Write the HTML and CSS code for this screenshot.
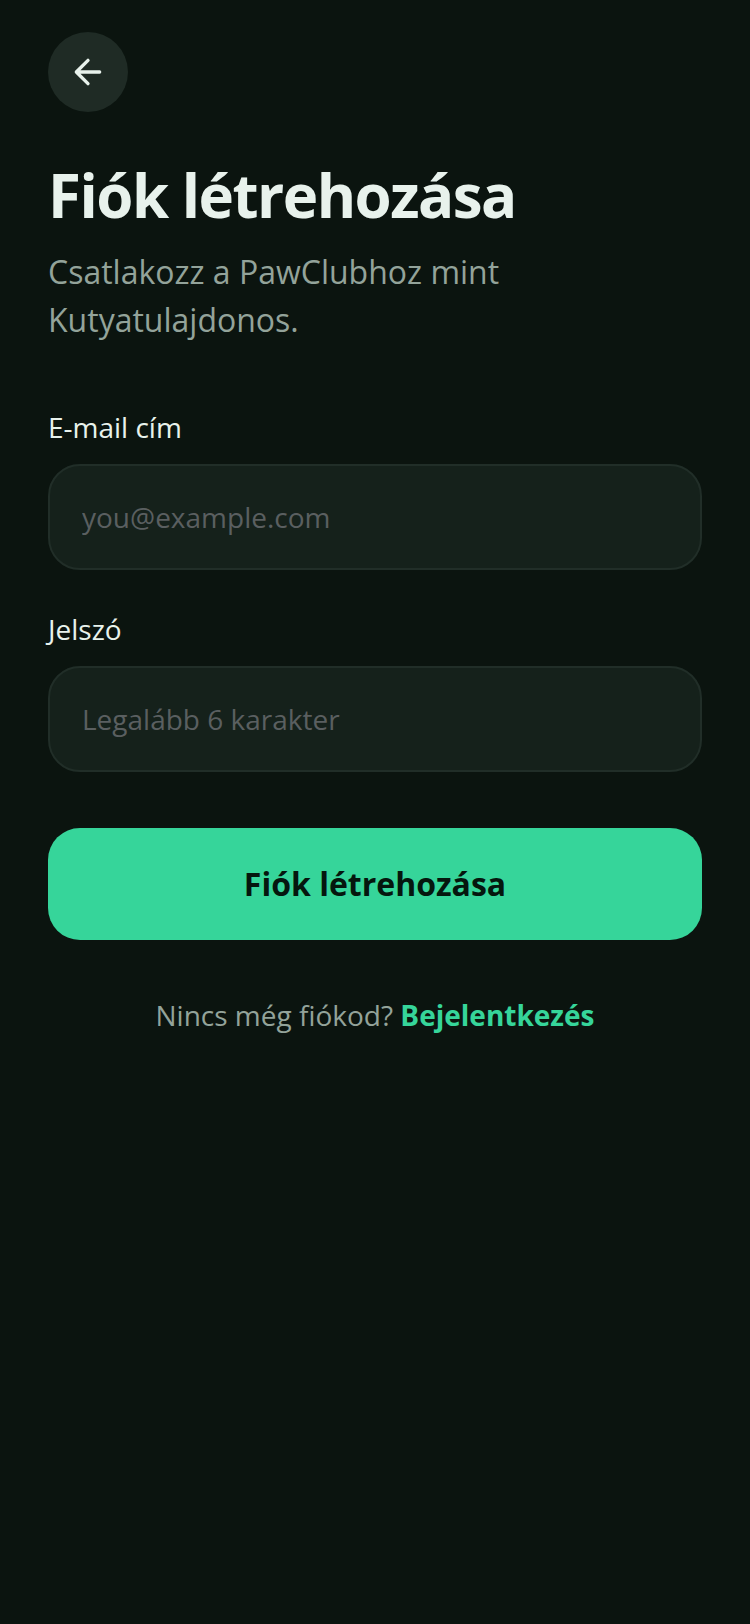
FILE: index.html
```
<!DOCTYPE html>
<html lang="hu">
<head>
  <meta charset="UTF-8" />
  <meta name="viewport" content="width=device-width, initial-scale=1.0"/>
  <title>PawClub - Fiók létrehozása</title>
  <link rel="stylesheet" href="styles.css">
</head>
<body>
  <main class="wrapper">
    <button type="button" class="back" aria-label="Vissza">
      <svg viewBox="0 0 24 24" aria-hidden="true">
        <path d="M19 12H5M12 19l-7-7 7-7" />
      </svg>
    </button>

    <header>
      <h1>Fiók létrehozása</h1>
      <p>Csatlakozz a PawClubhoz mint Kutyatulajdonos.</p>
    </header>

    <form id="signupForm">
      <div class="field">
        <label for="email">E-mail cím</label>
        <input type="email" id="email" placeholder="you@example.com" required />
      </div>
      <div class="field">
        <label for="password">Jelszó</label>
        <input type="password" id="password" placeholder="Legalább 6 karakter" minlength="6" required />
      </div>
      <button type="submit" class="submit">Fiók létrehozása</button>
    </form>

    <p class="login">Nincs még fiókod? <a href="#">Bejelentkezés</a></p>
  </main>
</body>
</html>
```
FILE: styles.css
```
* {
  box-sizing: border-box;
  margin: 0;
  padding: 0;
}

body {
  font-family: "Open Sans", "Noto Sans", sans-serif;
  background: #0b140f;
  min-height: 100vh;
  color: #e8f2ec;
}

.wrapper {
  padding: 32px 48px;
}

.back {
  display: flex;
  align-items: center;
  justify-content: center;
  width: 80px;
  height: 80px;
  border: none;
  border-radius: 50%;
  background: #1f2b25;
  color: #e8f2ec;
  cursor: pointer;
}

.back svg {
  width: 40px;
  height: 40px;
  fill: none;
  stroke: currentColor;
  stroke-width: 2;
  stroke-linecap: round;
  stroke-linejoin: round;
}

header {
  margin-top: 48px;
}

h1 {
  font-size: 60px;
  line-height: 70px;
  font-weight: 700;
  letter-spacing: -0.025em;
}

header p {
  margin-top: 18px;
  max-width: 560px;
  font-size: 32px;
  line-height: 48px;
  color: #93a39a;
}

form {
  margin-top: 64px;
}

.field {
  margin-bottom: 40px;
}

label {
  display: block;
  margin-bottom: 18px;
  font-size: 28px;
  line-height: 38px;
}

input {
  display: block;
  width: 100%;
  height: 106px;
  padding: 0 32px;
  border: 2px solid #212e28;
  border-radius: 32px;
  background: #15211b;
  color: #e8f2ec;
  font-family: inherit;
  font-size: 28px;
}

input::placeholder {
  color: #5a5f60;
}

.submit {
  width: 100%;
  height: 112px;
  margin-top: 16px;
  padding-bottom: 2px;
  border: none;
  border-radius: 32px;
  background: #36d59a;
  color: #05170e;
  font-family: inherit;
  font-size: 32px;
  font-weight: 700;
  cursor: pointer;
}

.login {
  margin-top: 56px;
  text-align: center;
  font-size: 28px;
  line-height: 38px;
  color: #93a39a;
}

.login a {
  color: #36d59a;
  font-weight: 700;
  text-decoration: none;
}
```
